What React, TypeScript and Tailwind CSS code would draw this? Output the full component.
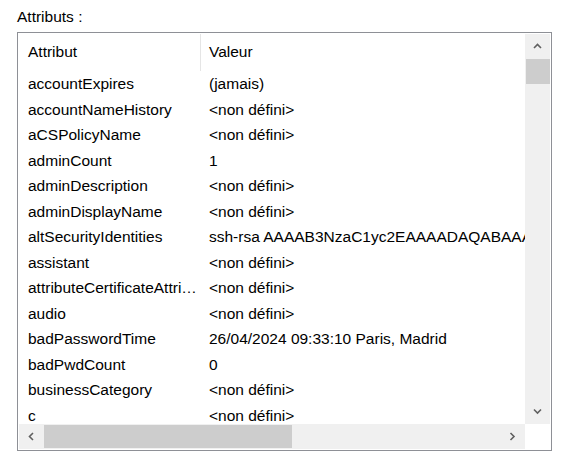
import React from "react"

const rows: [string, string][] = [
  ["accountExpires", "(jamais)"],
  ["accountNameHistory", "<non défini>"],
  ["aCSPolicyName", "<non défini>"],
  ["adminCount", "1"],
  ["adminDescription", "<non défini>"],
  ["adminDisplayName", "<non défini>"],
  ["altSecurityIdentities", "ssh-rsa AAAAB3NzaC1yc2EAAAADAQABAAABgQC7"],
  ["assistant", "<non défini>"],
  ["attributeCertificateAttribute", "<non défini>"],
  ["audio", "<non défini>"],
  ["badPasswordTime", "26/04/2024 09:33:10 Paris, Madrid"],
  ["badPwdCount", "0"],
  ["businessCategory", "<non défini>"],
  ["c", "<non défini>"],
]

function Chevron({ dir }: { dir: "up" | "down" | "left" | "right" }) {
  const d = {
    up: "M1 5 L4.5 1.5 L8 5",
    down: "M1 1.5 L4.5 5 L8 1.5",
    left: "M5 1 L1.5 4.5 L5 8",
    right: "M1.5 1 L5 4.5 L1.5 8",
  }[dir]
  const vertical = dir === "up" || dir === "down"
  return (
    <svg width={vertical ? 9 : 7} height={vertical ? 7 : 9} viewBox={vertical ? "0 0 9 7" : "0 0 7 9"}>
      <path d={d} fill="none" stroke="#606060" strokeWidth="1.6" />
    </svg>
  )
}

export default function App() {
  return (
    <div className="w-[561px] h-[460px] bg-white text-black font-['Liberation_Sans',Arial,sans-serif] text-[15.5px] overflow-hidden">
      <div className="pl-[17px] pt-[7px] h-[32px] leading-[20px]">Attributs :</div>
      <div className="ml-[17px] w-[535px] h-[419px] border border-[#8e9096] p-px flex flex-col">
        <div className="flex flex-1 min-h-0">
          <div className="flex-1 overflow-hidden">
            <div className="flex h-[37px] items-center">
              <div className="w-[182px] shrink-0 pl-[9px] border-r border-[#e5e5e5] h-full flex items-center pb-[1px]">
                Attribut
              </div>
              <div className="pl-[8px] pb-[1px]">Valeur</div>
            </div>
            {rows.map(([name, value]) => (
              <div key={name} className="flex h-[25.5px] items-center">
                <div className="w-[182px] shrink-0 pl-[9px] pr-[4px] truncate">{name}</div>
                <div className="pl-[8px] whitespace-nowrap">{value}</div>
              </div>
            ))}
          </div>
          <div className="w-[25px] bg-[#f0f0f0] flex flex-col items-center">
            <div className="h-[25px] w-full flex items-center justify-center">
              <Chevron dir="up" />
            </div>
            <div className="h-[25px] w-[24px] bg-[#cdcdcd]" />
            <div className="flex-1" />
            <div className="h-[25px] w-full flex items-center justify-center">
              <Chevron dir="down" />
            </div>
          </div>
        </div>
        <div className="h-[25px] flex">
          <div className="flex-1 bg-[#f0f0f0] flex items-center">
            <div className="w-[25px] h-full flex items-center justify-center">
              <Chevron dir="left" />
            </div>
            <div className="w-[248px] h-[23px] bg-[#cdcdcd]" />
            <div className="flex-1" />
            <div className="w-[25px] h-full flex items-center justify-center">
              <Chevron dir="right" />
            </div>
          </div>
          <div className="w-[25px] bg-white" />
        </div>
      </div>
    </div>
  )
}
